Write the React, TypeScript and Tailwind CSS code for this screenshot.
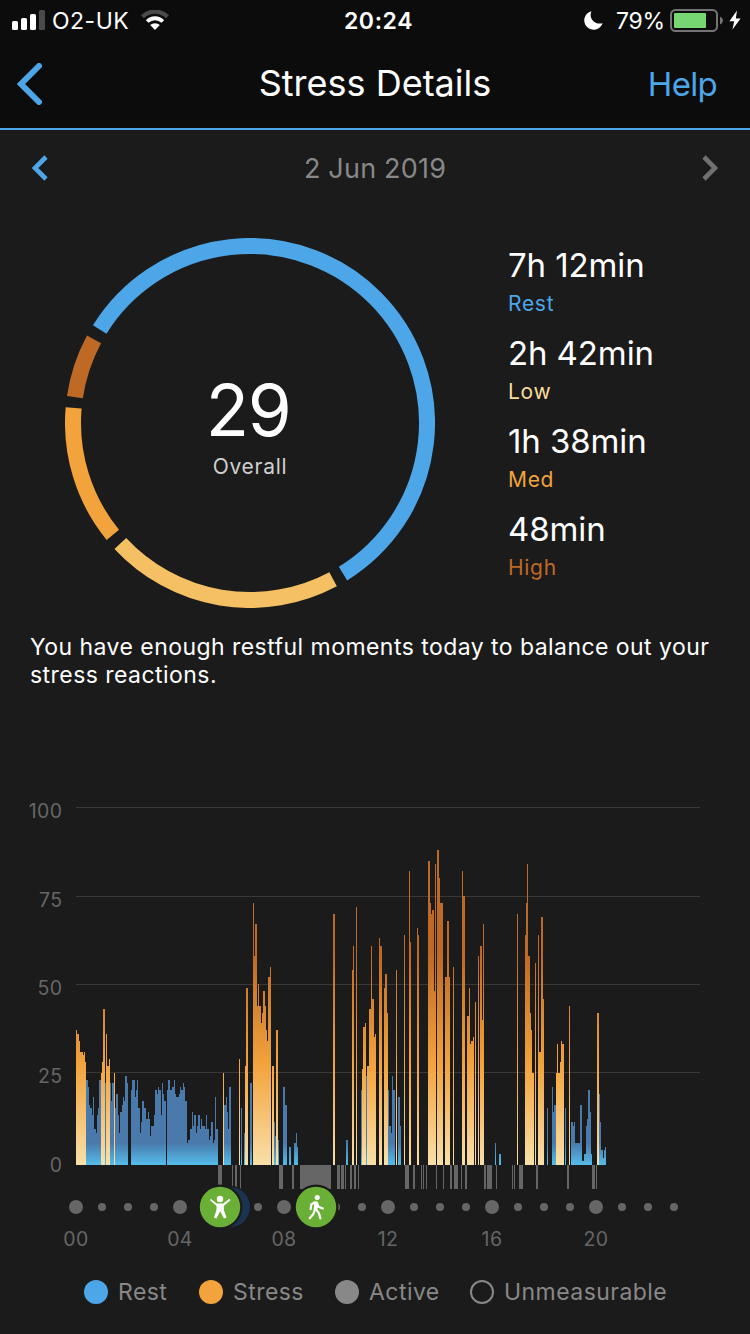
import React from "react";

type Bar = [x: number, width: number, top: number];

const BASELINE = 1165;

const restBars: Bar[] = [
  [86, 2, 1080], [88, 1, 1087], [89, 1, 1105], [90, 2, 1108], [92, 1, 1115], [93, 1, 1097],
  [94, 2, 1129], [96, 1, 1133], [97, 1, 1115], [98, 1, 1108], [99, 2, 1080], [105, 1, 1083],
  [110, 1, 1083], [111, 1, 1101], [112, 2, 1083], [115, 1, 1108], [116, 2, 1094], [118, 1, 1115],
  [119, 1, 1133], [120, 2, 1112], [122, 1, 1105], [123, 1, 1097], [124, 1, 1101], [125, 2, 1076],
  [127, 1, 1083], [131, 1, 1090], [132, 3, 1080], [135, 1, 1097], [136, 1, 1090], [137, 1, 1080],
  [138, 2, 1108], [140, 1, 1133], [141, 1, 1122], [142, 2, 1101], [144, 2, 1108], [146, 2, 1119],
  [148, 1, 1112], [149, 1, 1119], [150, 1, 1136], [151, 3, 1126], [154, 1, 1115], [155, 2, 1090],
  [157, 1, 1094], [158, 1, 1087], [159, 2, 1090], [161, 1, 1115], [162, 1, 1083], [163, 1, 1094],
  [164, 2, 1101], [167, 1, 1090], [168, 2, 1080], [170, 2, 1090], [172, 2, 1087], [174, 1, 1080],
  [175, 1, 1094], [176, 3, 1097], [179, 1, 1094], [180, 1, 1087], [181, 2, 1090], [183, 1, 1083],
  [184, 1, 1087], [185, 2, 1101], [187, 1, 1143], [188, 2, 1140], [190, 2, 1129], [192, 1, 1112],
  [193, 1, 1126], [194, 2, 1115], [196, 1, 1133], [197, 1, 1126], [198, 2, 1115], [200, 1, 1129],
  [201, 1, 1119], [202, 3, 1126], [205, 1, 1129], [206, 1, 1115], [207, 2, 1129], [209, 1, 1140],
  [210, 1, 1136], [211, 2, 1122], [213, 1, 1143], [214, 1, 1140], [215, 1, 1097], [216, 2, 1129],
  [224, 2, 1105], [226, 1, 1097], [227, 1, 1112], [228, 1, 1129], [229, 2, 1087], [241, 1, 1108],
  [244, 1, 1133], [250, 2, 1083], [274, 1, 1122], [275, 1, 1136], [278, 1, 1140], [283, 2, 1087],
  [285, 2, 1105], [289, 2, 1147], [294, 2, 1143], [296, 1, 1133], [297, 1, 1147], [346, 2, 1140],
  [361, 1, 1090], [366, 1, 1076], [388, 1, 1090], [389, 2, 1126], [391, 1, 1133], [392, 1, 1076],
  [393, 2, 1090], [398, 2, 1097], [400, 1, 1126], [495, 1, 1143], [499, 2, 1154], [547, 1, 1108],
  [552, 1, 1087], [553, 1, 1112], [554, 2, 1105], [565, 1, 1108], [571, 2, 1122], [573, 1, 1126],
  [574, 1, 1122], [575, 5, 1143], [580, 2, 1105], [582, 2, 1161], [584, 2, 1154], [586, 1, 1126],
  [587, 1, 1119], [588, 2, 1090], [590, 1, 1112], [591, 1, 1154], [599, 1, 1094], [600, 1, 1122],
  [601, 2, 1150], [603, 1, 1158], [604, 1, 1150], [605, 1, 1147],
];

const stressBars: Bar[] = [
  [76, 1, 1030], [77, 2, 1034], [79, 1, 1041], [80, 3, 1052], [83, 1, 1055], [84, 1, 1052],
  [85, 1, 1062], [101, 1, 1073], [102, 1, 1062], [103, 2, 1009], [106, 1, 1034], [107, 2, 1066],
  [109, 1, 1059], [114, 1, 1073], [223, 1, 1073], [239, 1, 1059], [245, 1, 1066], [246, 2, 988],
  [253, 1, 903], [254, 1, 956], [255, 2, 924], [257, 1, 1006], [258, 1, 984], [259, 2, 1006],
  [261, 1, 1023], [262, 1, 1013], [263, 2, 991], [265, 1, 1006], [266, 1, 1030], [267, 1, 1041],
  [268, 2, 977], [270, 1, 967], [272, 2, 1066], [276, 2, 1030], [333, 2, 914], [352, 1, 970],
  [353, 1, 946], [356, 1, 907], [362, 1, 1069], [363, 2, 1027], [365, 1, 1023], [367, 2, 1066],
  [369, 2, 1009], [371, 1, 946], [372, 2, 999], [374, 1, 1037], [375, 1, 1034], [379, 1, 938],
  [380, 2, 946], [384, 1, 988], [385, 2, 974], [387, 1, 1013], [396, 1, 970], [404, 1, 935],
  [409, 1, 871], [410, 1, 942], [417, 1, 928], [418, 1, 935], [428, 2, 861], [430, 1, 903],
  [431, 1, 914], [432, 2, 910], [434, 1, 991], [435, 1, 864], [437, 2, 850], [439, 1, 878],
  [440, 3, 903], [445, 2, 977], [447, 2, 921], [449, 1, 977], [453, 1, 967], [462, 1, 871],
  [463, 2, 896], [467, 2, 1016], [469, 1, 988], [470, 1, 1044], [471, 2, 1041], [473, 1, 1037],
  [475, 1, 1002], [478, 1, 956], [480, 2, 946], [482, 1, 1020], [483, 1, 924], [517, 1, 914],
  [525, 1, 935], [526, 1, 903], [527, 1, 864], [528, 2, 956], [530, 1, 1013], [531, 1, 1030],
  [532, 2, 1073], [535, 1, 963], [538, 1, 935], [539, 2, 1052], [541, 2, 917], [543, 1, 999],
  [556, 1, 1073], [557, 1, 1044], [558, 2, 1073], [560, 1, 1062], [561, 1, 1041], [562, 2, 1044],
  [569, 1, 1006], [597, 2, 1013],
];

// drawn below the baseline
const activeBars: [x: number, width: number][] = [
  [218, 4], [232, 1], [235, 2], [240, 1], [279, 4], [292, 2], [300, 31], [337, 3], [341, 3],
  [345, 1], [350, 2], [354, 2], [358, 1], [405, 4], [413, 2], [421, 1], [423, 1], [426, 1],
  [436, 1], [443, 1], [450, 2], [454, 4], [461, 1], [465, 2], [484, 2], [487, 5], [496, 1],
  [512, 1], [514, 1], [519, 4], [536, 2], [567, 2], [592, 3], [596, 1],
];

const gridLines = [
  { label: "100", y: 807 },
  { label: "75", y: 896 },
  { label: "50", y: 984 },
  { label: "25", y: 1072 },
  { label: "0", y: 1161 },
];

const segments = [
  { from: -58.1, to: 148.3, color: "#4da6e8" },
  { from: 152, to: 227.1, color: "#f5c064" },
  { from: 230.8, to: 274.9, color: "#f2a33c" },
  { from: 278.4, to: 298.2, color: "#bf6926" },
];

const durations = [
  { time: "7h 12min", label: "Rest", color: "text-[#4da6e8]" },
  { time: "2h 42min", label: "Low", color: "text-[#f9dc9c]" },
  { time: "1h 38min", label: "Med", color: "text-[#f2a33c]" },
  { time: "48min", label: "High", color: "text-[#bf6926]" },
];

const legend = [
  { label: "Rest", dot: "bg-[#4da6e8]", gap: "mr-8", width: "w-[49px]" },
  { label: "Stress", dot: "bg-[#f2a33c]", gap: "mr-8", width: "w-[70px]" },
  { label: "Active", dot: "bg-[#888888]", gap: "mr-8", width: "w-[69px]" },
  { label: "Unmeasurable", dot: "border-2 border-[#888888]", gap: "", width: "w-[162px]" },
];

const arcPath = (from: number, to: number) => {
  const point = (deg: number) => {
    const a = (deg * Math.PI) / 180;
    return `${185 + 177 * Math.sin(a)} ${185 - 177 * Math.cos(a)}`;
  };
  return `M${point(from)}A177 177 0 ${to - from > 180 ? 1 : 0} 1 ${point(to)}`;
};

const StatusBar = () => (
  <div className="grid h-10 grid-cols-[1fr_auto_1fr] items-center text-[23px] leading-[38px]">
    <div className="flex items-center pl-3">
      <svg width="33" height="20" viewBox="0 0 33 20" fill="#fff">
        <rect y="11" width="6" height="9" rx="1.5" />
        <rect x="9" y="8" width="6" height="12" rx="1.5" />
        <rect x="18" y="4" width="6" height="16" rx="1.5" />
        <rect x="27" width="6" height="20" rx="1.5" fill="#4a4a4a" />
      </svg>
      <span className="ml-[7px] w-[78px] pt-0.5 whitespace-nowrap tracking-[0.5px]">O2-UK</span>
      <svg className="ml-[11px]" width="28" height="20" viewBox="0 0 28 20" fill="none">
        <path d="M1.5 6.8a17.5 17.5 0 0 1 25 0" stroke="#4a4a4a" strokeWidth="4.2" />
        <path d="M6.2 11.5a11 11 0 0 1 15.6 0" stroke="#fff" strokeWidth="3.8" />
        <path d="M14 20l-4.8-4.9a6.9 6.9 0 0 1 9.6 0z" fill="#fff" />
      </svg>
    </div>
    <span className="pt-0.5 pl-[7px] font-semibold tracking-[0.6px]">20:24</span>
    <div className="flex items-center justify-end pr-[9px]">
      <svg width="19" height="19" viewBox="0 0 19 19" fill="#fff">
        <path d="M7.4.2C4.5 7.2 10.200 14 18.600 12.200A9.400 9.400 0 1 1 7.400.2z" />
      </svg>
      <span className="ml-[13px] w-[50px] pt-0.5 whitespace-nowrap tracking-[-0.3px]">79%</span>
      <svg className="ml-1" width="54" height="23" viewBox="0 0 54 23">
        <rect x="1" y="1" width="46" height="21" rx="4.500" fill="none" stroke="#747474" strokeWidth="2" />
        <rect x="4" y="4" width="32" height="15" rx="1" fill="#76d672" />
        <path d="M50 7.500q3 1.500 3 4t-3 4z" fill="#747474" />
      </svg>
      <svg className="ml-[5px]" width="12" height="20" viewBox="0 0 12 20" fill="#fff">
        <path d="M8 .5 .4 11.300h4.800L3.500 19.500 11.600 8.400H6.800z" />
      </svg>
    </div>
  </div>
);

const NavBar = () => (
  <div className="grid h-[88px] grid-cols-[1fr_auto_1fr] items-center">
    <svg className="ml-[17px]" width="26" height="42" viewBox="0 0 26 42" fill="none">
      <path d="M22 3 4 21l18 18" stroke="#4da6e8" strokeWidth="6" strokeLinecap="round" />
    </svg>
    <h1 className="pb-0.5 text-[36px] leading-10">Stress Details</h1>
    <span className="pr-[33px] text-right text-[33px] leading-10 tracking-[-0.7px] text-[#4da6e8]">
      Help
    </span>
  </div>
);

const DatePicker = () => (
  <div className="flex h-[76px] items-center justify-between px-8 text-[27px] leading-10 text-[#888888]">
    <svg width="16" height="26" viewBox="0 0 16 26" fill="none">
      <path d="M14 2 3 13l11 11" stroke="#4da6e8" strokeWidth="4.600" />
    </svg>
    <span className="pt-0.5 tracking-[0.2px]">2 Jun 2019</span>
    <svg width="16" height="26" viewBox="0 0 16 26" fill="none">
      <path d="m2 2 11 11L2 24" stroke="#707070" strokeWidth="4.600" />
    </svg>
  </div>
);

const StressRing = () => (
  <div className="grid size-[370px] place-items-center">
    <svg className="col-start-1 row-start-1" width="370" height="370" fill="none">
      {segments.map((s) => (
        <path key={s.color} d={arcPath(s.from, s.to)} stroke={s.color} strokeWidth="16" />
      ))}
    </svg>
    <div className="col-start-1 row-start-1 flex flex-col items-center pt-1">
      <span className="pr-1 text-[71px] leading-[80px] tracking-[-1.5px]">29</span>
      <span className="mt-[3px] text-[21px] leading-[27px] tracking-[0.7px] text-[#d0d0d0]">
        Overall
      </span>
    </div>
  </div>
);

const Timeline = () => (
  <g>
    {Array.from({ length: 24 }, (_, hour) => (
      <circle key={hour} cx={76 + hour * 26} cy="1207" r={hour % 4 === 0 ? 7 : 4} fill="#666" />
    ))}
    <circle cx="230" cy="1207" r="21.500" fill="#1b1b1b" />
    <circle cx="230" cy="1207" r="20" fill="#1b3350" />
    <circle cx="220" cy="1207" r="22.500" fill="#1b1b1b" />
    <circle cx="220" cy="1207" r="20.200" fill="#6aaf36" />
    <circle cx="316" cy="1207" r="22.500" fill="#1b1b1b" />
    <circle cx="316" cy="1207" r="20.200" fill="#6aaf36" />
    <g fill="#fff">
      <circle cx="220" cy="1199" r="3.200" />
      <path d="M210.600 1198.800l6.200 4.600h6.400l6.200-4.600 1 1.500-6.600 5.700.2 4.500 2.500 7-2.500 1-3.800-7.300-3.800 7.300-2.500-1 2.500-7 .2-4.500-6.600-5.700z" />
      <circle cx="317.200" cy="1197.600" r="2.500" />
    </g>
    <path
      d="M315.800 1202.500l-.8 7M314.500 1202.300l-3.200 2.200-.7 4.700M317 1202.800l1.500 4 4.300 1.800M315 1209.500l-1.600 4.300-3.600 4.400M315.600 1208.800l3.300 4.300 1.500 5.300"
      fill="none"
      stroke="#fff"
      strokeWidth="2.200"
      strokeLinecap="round"
      strokeLinejoin="round"
    />
    <path d="m314.500 1201.200 3 .6.8 3.800-1.300 5-3.500-.4z" fill="#fff" />
  </g>
);

const StressChart = () => (
  <svg width="750" height="470" viewBox="0 790 750 470" fontSize="19.5">
    <defs>
      <linearGradient id="stress" gradientUnits="userSpaceOnUse" x1="0" y1={BASELINE} x2="0" y2="850">
        <stop offset="0" stopColor="#f9e0a8" />
        <stop offset="0.320" stopColor="#f2a33c" />
        <stop offset="0.670" stopColor="#bf6926" />
      </linearGradient>
      <linearGradient id="rest" gradientUnits="userSpaceOnUse" x1="0" y1={BASELINE} x2="0" y2="1143">
        <stop offset="0" stopColor="#55bdeb" />
        <stop offset="1" stopColor="#497aab" />
      </linearGradient>
    </defs>

    {gridLines.map(({ label, y }) => (
      <g key={label}>
        {label !== "0" && <rect x="76" y={y} width="624" height="1" fill="#383838" />}
        <text x="62.500" y={y + 11} textAnchor="end" fill="#666" letterSpacing="0.400">
          {label}
        </text>
      </g>
    ))}

    <g fill="url(#rest)">
      {restBars.map(([x, w, top]) => (
        <rect key={x} x={x} y={top} width={w} height={BASELINE - top} />
      ))}
    </g>
    <g fill="url(#stress)">
      {stressBars.map(([x, w, top]) => (
        <rect key={x} x={x} y={top} width={w} height={BASELINE - top} />
      ))}
    </g>
    <g fill="#666">
      {activeBars.map(([x, w]) => (
        <rect key={x} x={x} y={BASELINE} width={w} height="24" />
      ))}
    </g>

    <Timeline />

    {["00", "04", "08", "12", "16", "20"].map((hour, i) => (
      <text key={hour} x={76 + i * 104} y="1246" textAnchor="middle" fill="#666" letterSpacing="0.400">
        {hour}
      </text>
    ))}
  </svg>
);

export default function App() {
  return (
    <div className="h-[1334px] w-[750px] overflow-hidden bg-[#1b1b1b] font-['Inter','Liberation_Sans',sans-serif] text-white">
      <header className="border-b-2 border-[#4da6e8] bg-[#0c0c0c]">
        <StatusBar />
        <NavBar />
      </header>

      <DatePicker />

      <section className="flex pt-8 pl-[65px]">
        <StressRing />
        <ul className="ml-[73px] pt-1">
          {durations.map((d) => (
            <li key={d.label} className="h-[88px]">
              <div className="text-[33px] leading-[46px] tracking-[-0.1px]">{d.time}</div>
              <div className={`text-[21px] leading-[31px] tracking-[0.7px] ${d.color}`}>{d.label}</div>
            </li>
          ))}
        </ul>
      </section>

      <p className="mt-[25px] h-[157px] pl-[30px] text-[23px] leading-7 tracking-[0.45px]">
        You have enough restful moments today to balance out your
        <br />
        stress reactions.
      </p>

      <StressChart />

      <ul className="mt-4 flex h-8 items-center pl-[84px] text-[23px] text-[#888888]">
        {legend.map((item) => (
          <li key={item.label} className={`flex items-center ${item.gap}`}>
            <span className={`mr-[10px] size-6 rounded-full ${item.dot}`} />
            <span className={`whitespace-nowrap tracking-[0.45px] ${item.width}`}>{item.label}</span>
          </li>
        ))}
      </ul>
    </div>
  );
}
